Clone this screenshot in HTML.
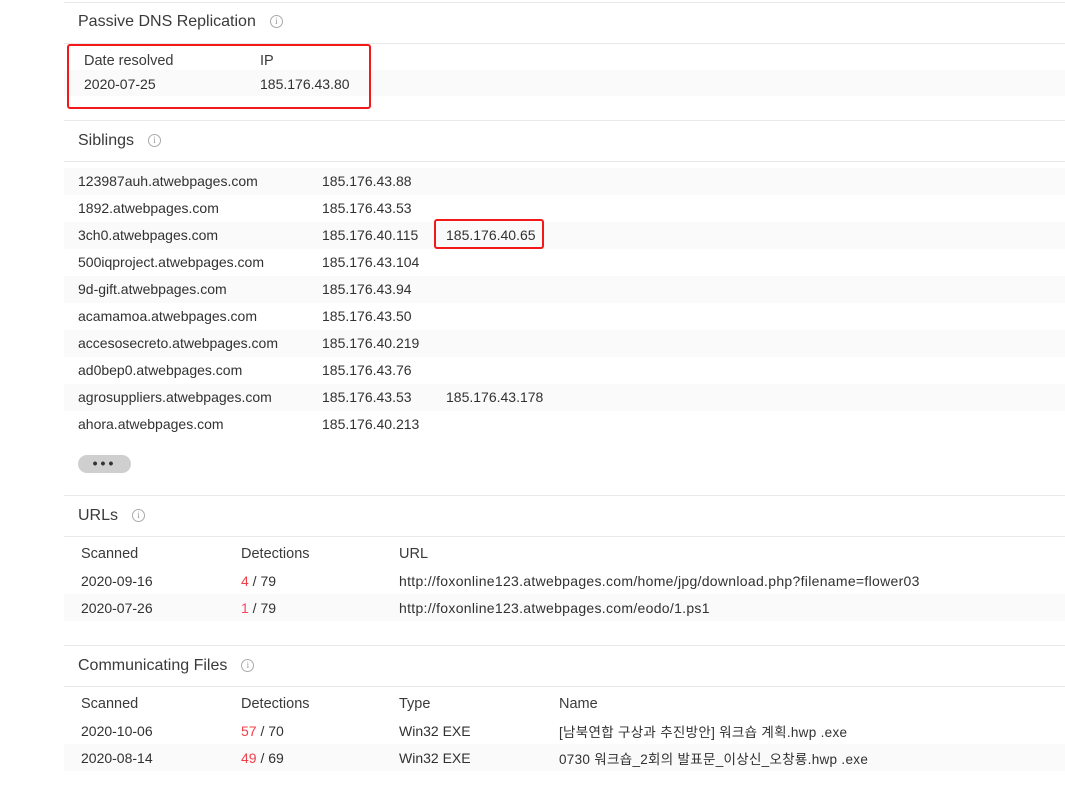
<!DOCTYPE html>
<html><head><meta charset="utf-8"><style>
body{margin:0;width:1065px;height:792px;background:#fff;font-family:"Liberation Sans","Noto Sans CJK KR",sans-serif;color:#313131;font-size:14px;position:relative;overflow:hidden}
.a{position:absolute;white-space:nowrap}
.hl{position:absolute;left:64px;right:0;height:1px;background:#e8e8e8}
.h{font-size:16px;color:#3a3a3a}
.i{display:inline-block;width:11px;height:11px;border:1px solid #aaa;border-radius:50%;font-size:9px;line-height:11px;text-align:center;color:#999;vertical-align:2px;margin-left:14px;font-family:"Liberation Serif",serif}
.row{position:absolute;left:64px;right:0;height:27px;background:#fafafa}
.red{color:#f0404a}
.box{position:absolute;border:2px solid #f41818;border-radius:3px}
.th{color:#3a3a3a;font-size:14.5px}
.k{font-size:13.5px;letter-spacing:0.3px}
</style></head><body>
<div class="hl" style="top:2px"></div>
<div class="a h" style="left:78px;top:13px">Passive DNS Replication<span class="i">i</span></div>
<div class="hl" style="top:43px"></div>
<div class="row" style="top:70px;height:26px"></div>
<div class="a th" style="left:84px;top:53px">Date resolved</div>
<div class="a th" style="left:260px;top:53px">IP</div>
<div class="a" style="left:84px;top:76px">2020-07-25</div>
<div class="a" style="left:260px;top:76px">185.176.43.80</div>
<div class="box" style="left:67px;top:44px;width:300px;height:61px"></div>
<div class="hl" style="top:120px"></div>
<div class="a h" style="left:78px;top:132px">Siblings<span class="i">i</span></div>
<div class="hl" style="top:161px"></div>
<div class="row" style="top:168px"></div>
<div class="row" style="top:222px"></div>
<div class="row" style="top:276px"></div>
<div class="row" style="top:330px"></div>
<div class="row" style="top:384px"></div>
<div class="a" style="left:78px;top:168px;line-height:27px">123987auh.atwebpages.com<br>1892.atwebpages.com<br>3ch0.atwebpages.com<br>500iqproject.atwebpages.com<br>9d-gift.atwebpages.com<br>acamamoa.atwebpages.com<br>accesosecreto.atwebpages.com<br>ad0bep0.atwebpages.com<br>agrosuppliers.atwebpages.com<br>ahora.atwebpages.com</div>
<div class="a" style="left:322px;top:168px;line-height:27px">185.176.43.88<br>185.176.43.53<br>185.176.40.115<br>185.176.43.104<br>185.176.43.94<br>185.176.43.50<br>185.176.40.219<br>185.176.43.76<br>185.176.43.53<br>185.176.40.213</div>
<div class="a" style="left:446px;top:227px">185.176.40.65</div>
<div class="a" style="left:446px;top:389px">185.176.43.178</div>
<div class="box" style="left:434px;top:219px;width:106px;height:26px"></div>
<div class="a" style="left:78px;top:455px;width:53px;height:18px;background:#cfcfcf;border-radius:9px;text-align:center;font-size:14px;line-height:17px;letter-spacing:3px;color:#333;font-weight:bold">•••</div>
<div class="hl" style="top:495px"></div>
<div class="a h" style="left:78px;top:507px">URLs<span class="i">i</span></div>
<div class="hl" style="top:536px"></div>
<div class="a th" style="left:81px;top:546px">Scanned</div>
<div class="a th" style="left:241px;top:546px">Detections</div>
<div class="a th" style="left:399px;top:546px">URL</div>
<div class="row" style="top:594px"></div>
<div class="a" style="left:81px;top:573px">2020-09-16</div>
<div class="a" style="left:241px;top:573px"><span class="red">4</span> / 79</div>
<div class="a" style="left:399px;top:573px;letter-spacing:0.3px">http://foxonline123.atwebpages.com/home/jpg/download.php?filename=flower03</div>
<div class="a" style="left:81px;top:600px">2020-07-26</div>
<div class="a" style="left:241px;top:600px"><span class="red" style="color:#f46">1</span> / 79</div>
<div class="a" style="left:399px;top:600px;letter-spacing:0.3px">http://foxonline123.atwebpages.com/eodo/1.ps1</div>
<div class="hl" style="top:645px"></div>
<div class="a h" style="left:78px;top:657px">Communicating Files<span class="i">i</span></div>
<div class="hl" style="top:686px"></div>
<div class="a th" style="left:81px;top:696px">Scanned</div>
<div class="a th" style="left:241px;top:696px">Detections</div>
<div class="a th" style="left:399px;top:696px">Type</div>
<div class="a th" style="left:559px;top:696px">Name</div>
<div class="row" style="top:744px"></div>
<div class="a" style="left:81px;top:723px">2020-10-06</div>
<div class="a" style="left:241px;top:723px"><span class="red">57</span> / 70</div>
<div class="a" style="left:399px;top:723px">Win32 EXE</div>
<div class="a k" style="left:559px;top:721px">[남북연합 구상과 추진방안] 워크숍 계획.hwp .exe</div>
<div class="a" style="left:81px;top:750px">2020-08-14</div>
<div class="a" style="left:241px;top:750px"><span class="red">49</span> / 69</div>
<div class="a" style="left:399px;top:750px">Win32 EXE</div>
<div class="a k" style="left:559px;top:748px">0730 워크숍_2회의 발표문_이상신_오창룡.hwp .exe</div>
</body></html>
